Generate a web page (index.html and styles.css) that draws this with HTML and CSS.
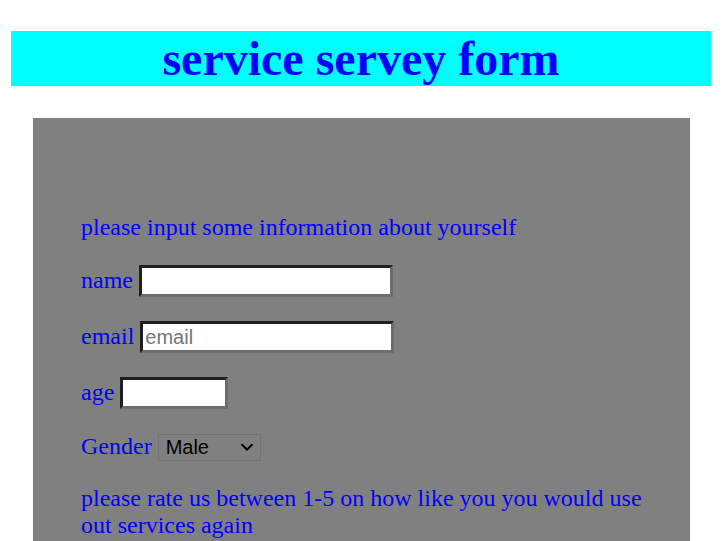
FILE: index.html
```html
<!DOCTYPE html>
<html lang="en">
<head>
<meta charset="utf-8">
<title>service servey form</title>
<link rel="stylesheet" href="styles.css">
</head>
<body class="page">
  <h1 class="title">service servey form</h1>
  <form class="survey">
    <p class="row">please input some information about yourself</p>
    <p class="row">name <input class="field field-name" type="text"></p>
    <p class="row">email <input class="field field-email" type="email" placeholder="email"></p>
    <p class="row">age <input class="field field-age" type="number"></p>
    <p class="row">Gender <span class="select-wrap"><select class="choice">
        <option>Male</option>
        <option>Female</option>
        <option>Other</option>
      </select><svg class="chevron" width="14" height="8" viewBox="0 0 14 8" aria-hidden="true"><path d="M1.5 1.2 L7 6.5 L12.5 1.2" fill="none" stroke="#000" stroke-width="2"/></svg></span></p>
    <p class="row">please rate us between 1-5 on how like you you would use out services again</p>
  </form>
</body>
</html>
```

FILE: styles.css
```css
html::-webkit-scrollbar {
  width: 2px;
  background: #f1f1f1;
}

.page {
  margin: 0;
  padding: 31px 0 0 11px;
  background: #ffffff;
  font-family: "Liberation Serif", "Times New Roman", serif;
}

.title {
  width: 700px;
  height: 55px;
  margin: 0;
  background: #00ffff;
  color: #0000ff;
  font-size: 48px;
  font-weight: bold;
  line-height: 55px;
  text-align: center;
}

.survey {
  box-sizing: border-box;
  width: 657px;
  margin: 32px 0 0 22px;
  padding: 72px 48px 60px;
  background: #808080;
  color: #0000ff;
  font-size: 24px;
}

.row {
  margin: 24px 0;
}

.field {
  box-sizing: border-box;
  height: 32px;
  padding: 1px 2px;
  border-style: solid;
  border-width: 3px;
  border-color: #1f1f1f #6c6c6c #6c6c6c #1f1f1f;
  background: #ffffff;
  font-family: "Liberation Sans", Arial, sans-serif;
  font-size: 20px;
  color: #000000;
  vertical-align: baseline;
}

.field::placeholder {
  color: #757575;
}

.field-name,
.field-email {
  width: 254px;
}

.field-age {
  width: 108px;
}

.select-wrap {
  position: relative;
  display: inline-block;
}

.choice {
  box-sizing: border-box;
  width: 103px;
  height: 27px;
  padding: 0 0 0 7px;
  border: 1px solid #737373;
  border-radius: 0;
  background-color: transparent;
  appearance: none;
  -webkit-appearance: none;
  font-family: "Liberation Sans", Arial, sans-serif;
  font-size: 20px;
  color: #000000;
}

.chevron {
  position: absolute;
  left: 82px;
  top: 10px;
  pointer-events: none;
}
```
